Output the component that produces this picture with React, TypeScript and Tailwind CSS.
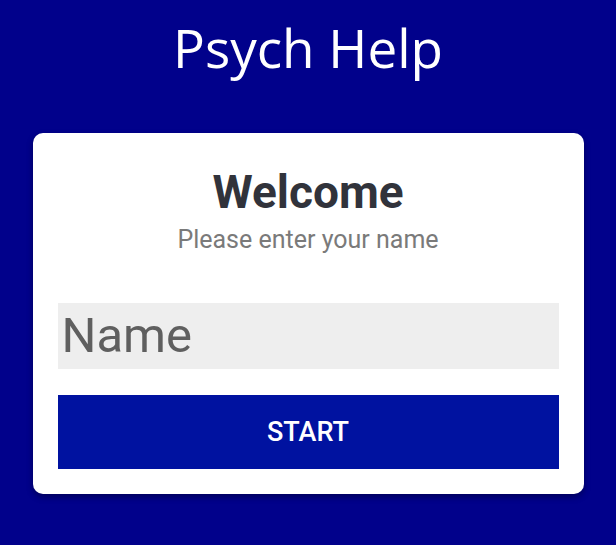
import { useState } from 'react';

export default function App() {
  const [name, setName] = useState('');

  return (
    <div className="min-h-[545px] w-full bg-[#01018b] flex flex-col items-center pt-[16px]">
      {/* Title */}
      <h1 className="text-white text-[53px] leading-[64px] font-medium font-['Open_Sans',sans-serif]">
        Psych Help
      </h1>

      {/* Card */}
      <div className="mt-[53px] w-[551px] bg-white rounded-[10px] shadow-[0_3px_6px_rgba(0,0,0,0.35)] px-[25px] pt-[32px] pb-[25px] font-['Roboto',sans-serif]">
        <h2 className="text-center text-[46px] leading-[54px] font-bold text-[#31333b]">
          Welcome
        </h2>
        <p className="text-center text-[25px] leading-[30px] text-[#7a7a7a] mt-[6px]">
          Please enter your name
        </p>

        <input
          value={name}
          onChange={(e) => setName(e.target.value)}
          placeholder="Name"
          className="mt-[48px] block w-full h-[66px] bg-[#eeeeee] px-[4px] text-[49px] text-[#333] placeholder:text-[#5f5f5f] outline-none"
        />

        <button className="mt-[26px] block w-full h-[74px] bg-[#0012a0] text-white text-[27px] font-medium">
          START
        </button>
      </div>
    </div>
  );
}
